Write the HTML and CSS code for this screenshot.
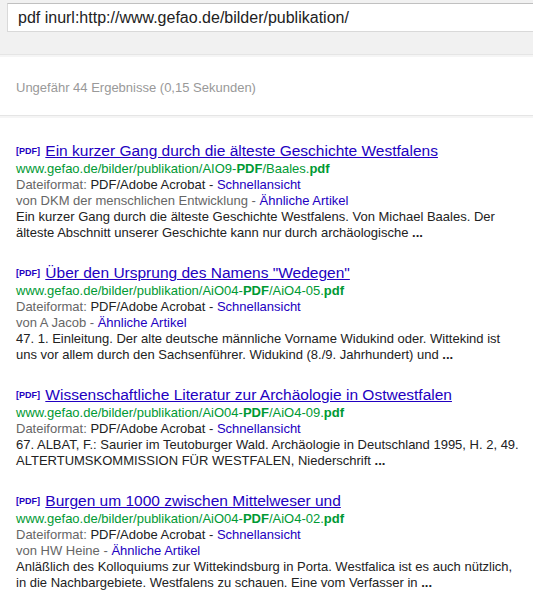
FILE: index.html
```html
<!DOCTYPE html>
<html lang="de">
<head>
  <meta charset="UTF-8">
  <title>pdf inurl:http://www.gefao.de/bilder/publikation/</title>
  <link rel="stylesheet" href="styles.css">
</head>
<body>

  <div class="searchbar">
    <div class="query">pdf inurl:http://www.gefao.de/bilder/publikation/</div>
  </div>

  <div class="stats">Ungefähr 44 Ergebnisse (0,15 Sekunden)</div>

  <div class="results">

    <div class="result">
      <div class="title"><span class="mime">[PDF]</span> <a href="#">Ein kurzer Gang durch die älteste Geschichte Westfalens</a></div>
      <div class="url">www.gefao.de/bilder/publikation/AIO9-<b>PDF</b>/Baales.<b>pdf</b></div>
      <div class="meta"><span class="grey">Dateiformat:</span> PDF/Adobe Acrobat - <a href="#">Schnellansicht</a></div>
      <div class="meta"><span class="grey">von DKM der menschlichen Entwicklung -</span> <a href="#">Ähnliche Artikel</a></div>
      <div class="snippet">Ein kurzer Gang durch die älteste Geschichte Westfalens. Von Michael Baales. Der<br>älteste Abschnitt unserer Geschichte kann nur durch archäologische <b>...</b></div>
    </div>

    <div class="result">
      <div class="title"><span class="mime">[PDF]</span> <a href="#">Über den Ursprung des Namens "Wedegen"</a></div>
      <div class="url">www.gefao.de/bilder/publikation/AiO04-<b>PDF</b>/AiO4-05.<b>pdf</b></div>
      <div class="meta"><span class="grey">Dateiformat:</span> PDF/Adobe Acrobat - <a href="#">Schnellansicht</a></div>
      <div class="meta"><span class="grey">von A Jacob -</span> <a href="#">Ähnliche Artikel</a></div>
      <div class="snippet">47. 1. Einleitung. Der alte deutsche männliche Vorname Widukind oder. Wittekind ist<br>uns vor allem durch den Sachsenführer. Widukind (8./9. Jahrhundert) und <b>...</b></div>
    </div>

    <div class="result">
      <div class="title"><span class="mime">[PDF]</span> <a href="#">Wissenschaftliche Literatur zur Archäologie in Ostwestfalen</a></div>
      <div class="url">www.gefao.de/bilder/publikation/AiO04-<b>PDF</b>/AiO4-09.<b>pdf</b></div>
      <div class="meta"><span class="grey">Dateiformat:</span> PDF/Adobe Acrobat - <a href="#">Schnellansicht</a></div>
      <div class="snippet">67. ALBAT, F.: Saurier im Teutoburger Wald. Archäologie in Deutschland 1995, H. 2, 49.<br>ALTERTUMSKOMMISSION FÜR WESTFALEN, Niederschrift <b>...</b></div>
    </div>

    <div class="result">
      <div class="title"><span class="mime">[PDF]</span> <a href="#">Burgen um 1000 zwischen Mittelweser und</a></div>
      <div class="url">www.gefao.de/bilder/publikation/AiO04-<b>PDF</b>/AiO4-02.<b>pdf</b></div>
      <div class="meta"><span class="grey">Dateiformat:</span> PDF/Adobe Acrobat - <a href="#">Schnellansicht</a></div>
      <div class="meta"><span class="grey">von HW Heine -</span> <a href="#">Ähnliche Artikel</a></div>
      <div class="snippet">Anläßlich des Kolloquiums zur Wittekindsburg in Porta. Westfalica ist es auch nützlich,<br>in die Nachbargebiete. Westfalens zu schauen. Eine vom Verfasser in <b>...</b></div>
    </div>

  </div>

</body>
</html>
```

FILE: styles.css
```css
body {
  margin: 0;
  font-family: "Liberation Sans", Arial, sans-serif;
  background-color: #fff;
  color: #222;
  overflow: hidden;
}
.searchbar {
  background-color: #f1f1f1;
  padding: 3px 0 22px 7px;
  border-bottom: 1px solid #e5e5e5;
  box-shadow: 0 2px 0 #f5f5f5;
}
.query {
  background-color: #fff;
  border: 1px solid #d9d9d9;
  border-top-color: #c0c0c0;
  border-right: none;
  height: 27px;
  line-height: 27px;
  padding-left: 10px;
  font-size: 16px;
  color: #222;
  white-space: nowrap;
}
.stats {
  padding: 25px 16px 0;
  height: 35px;
  font-size: 13px;
  line-height: 16px;
  color: #999;
  border-bottom: 1px solid #e5e5e5;
  box-shadow: 0 2px 0 #f5f5f5;
}
.results {
  padding: 25px 0 0 16px;
}
.result {
  margin-bottom: 22px;
}
.title {
  font-size: 15.5px;
  line-height: 19px;
  white-space: nowrap;
}
.title a {
  color: #2200c1;
}
.mime {
  font-size: 9px;
  font-weight: bold;
  color: #2200c1;
  vertical-align: 2px;
  margin-right: 1px;
}
.url {
  font-size: 13px;
  line-height: 16px;
  color: #009933;
  white-space: nowrap;
}
.meta, .snippet {
  font-size: 13px;
  line-height: 16px;
  color: #222;
  white-space: nowrap;
}
.meta a {
  color: #2200c1;
  text-decoration: none;
}
.grey {
  color: #666;
}
```
